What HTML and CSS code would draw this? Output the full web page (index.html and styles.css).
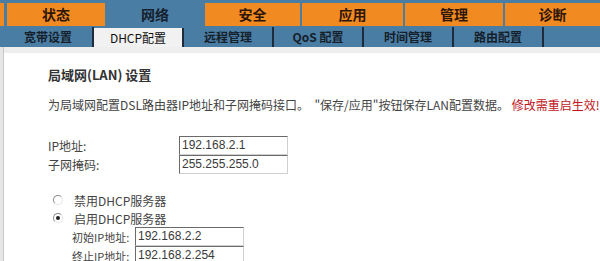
FILE: index.html
```html
<!DOCTYPE html>
<html lang="zh-CN">
<head>
    <meta charset="UTF-8">
    <title>DHCP配置</title>
    <link rel="stylesheet" href="styles.css">
</head>
<body>
    <div class="main-nav">
        <div class="edge"></div>
        <div class="m-tab w98">状态</div>
        <div class="m-tab w96 active">网络</div>
        <div class="m-tab w95">安全</div>
        <div class="m-tab w101">应用</div>
        <div class="m-tab w98">管理</div>
        <div class="m-tab last">诊断</div>
    </div>
    <div class="sub-nav">
        <div class="s-tab">宽带设置</div>
        <div class="s-tab active">DHCP配置</div>
        <div class="s-tab">远程管理</div>
        <div class="s-tab">QoS 配置</div>
        <div class="s-tab">时间管理</div>
        <div class="s-tab">路由配置</div>
    </div>

    <div class="page">
        <div class="strip"></div>
        <div class="content">
            <h1 class="title">局域网(LAN) 设置</h1>
            <p class="desc">为局域网配置DSL路由器IP地址和子网掩码接口。&nbsp; "保存/应用"按钮保存LAN配置数据。 <span class="warn">修改需重启生效!</span></p>

            <div class="form-row">
                <span class="label wide">IP地址:</span>
                <span class="field">192.168.2.1</span>
            </div>
            <div class="form-row">
                <span class="label wide">子网掩码:</span>
                <span class="field">255.255.255.0</span>
            </div>

            <div class="dhcp">
                <div class="radio-row"><span class="radio"></span>禁用DHCP服务器</div>
                <div class="radio-row"><span class="radio on"></span>启用DHCP服务器</div>
                <div class="form-row sub">
                    <span class="label">初始IP地址:</span>
                    <span class="field">192.168.2.2</span>
                </div>
                <div class="form-row sub">
                    <span class="label">终止IP地址:</span>
                    <span class="field">192.168.2.254</span>
                </div>
            </div>
        </div>
    </div>
</body>
</html>
```

FILE: styles.css
```css
body {
    margin: 0;
    padding: 0;
    width: 600px;
    height: 261px;
    overflow: hidden;
    background-color: #fff;
    font-family: 'Noto Sans CJK SC', 'Liberation Sans', sans-serif;
    color: #333;
}

.main-nav {
    display: flex;
    gap: 2px;
    height: 27px;
    padding-top: 3px;
    box-sizing: border-box;
    background-color: #4a7da4;
}

.edge {
    width: 4px;
    height: 23px;
    margin-right: 1px;
    background-color: #f28a22;
}

.m-tab {
    height: 23px;
    line-height: 23px;
    text-align: center;
    font-size: 14px;
    font-weight: bold;
    color: #2e1608;
    background-color: #f28a22;
}

.m-tab.active {
    background-color: #4a7da4;
    color: #14202c;
}

.w98 { width: 98px; }
.w96 { width: 96px; }
.w95 { width: 95px; }
.w101 { width: 101px; }
.last { flex: 1; }

.sub-nav {
    display: flex;
    height: 20px;
    padding-left: 4px;
    background-color: #4a7da4;
}

.s-tab {
    width: 88px;
    height: 20px;
    line-height: 20px;
    text-align: center;
    font-size: 12px;
    font-weight: bold;
    color: #15202a;
    border-right: 2px solid #1d2b3a;
}

.s-tab.active {
    background-color: #f1f1f1;
    font-weight: normal;
    color: #111;
    margin-top: 1px;
    height: 19px;
    line-height: 19px;
}

.page {
    display: flex;
    height: 214px;
}

.strip {
    width: 3px;
    background-color: #e6e6e6;
    border-right: 1px solid #c8c8c8;
}

.content {
    flex: 1;
    padding-left: 44px;
    border-top: 6px solid #eeeeee;
    white-space: nowrap;
    overflow: hidden;
}

.title {
    margin: 13px 0 0;
    font-size: 13px;
    font-weight: bold;
    line-height: 18px;
    color: #333;
}

.desc {
    margin: 13px 0 0;
    font-size: 12px;
    line-height: 16px;
    color: #444;
}

.warn {
    color: #c0161a;
}

.form-row {
    display: flex;
    align-items: center;
    height: 19px;
    font-size: 12px;
    color: #444;
}

.desc + .form-row {
    margin-top: 23px;
}

.label {
    flex-shrink: 0;
    width: 63px;
    font-size: 11px;
}

.label.wide {
    width: 131px;
    font-size: 12px;
}

.field {
    flex-shrink: 0;
    width: 109px;
    height: 19px;
    line-height: 17px;
    padding-left: 2px;
    box-sizing: border-box;
    border: 1px solid #d0d0d0;
    border-top-color: #6a6a6a;
    border-left-color: #6a6a6a;
    font-family: 'Liberation Sans', sans-serif;
    font-size: 12px;
    color: #3a3a3a;
}

.dhcp {
    margin-top: 17px;
    padding-left: 5px;
}

.radio-row {
    display: flex;
    align-items: center;
    height: 18px;
    font-size: 12px;
    color: #444;
}

.radio {
    position: relative;
    width: 8px;
    height: 8px;
    margin-right: 11px;
    border-radius: 50%;
    border: 1px solid #e4e4e4;
    border-top-color: #8a8a8a;
    border-left-color: #8a8a8a;
    background-color: #fff;
}

.radio.on::after {
    content: '';
    position: absolute;
    left: 2px;
    top: 2px;
    width: 4px;
    height: 4px;
    border-radius: 50%;
    background-color: #222;
}

.form-row.sub {
    padding-left: 19px;
}
```
